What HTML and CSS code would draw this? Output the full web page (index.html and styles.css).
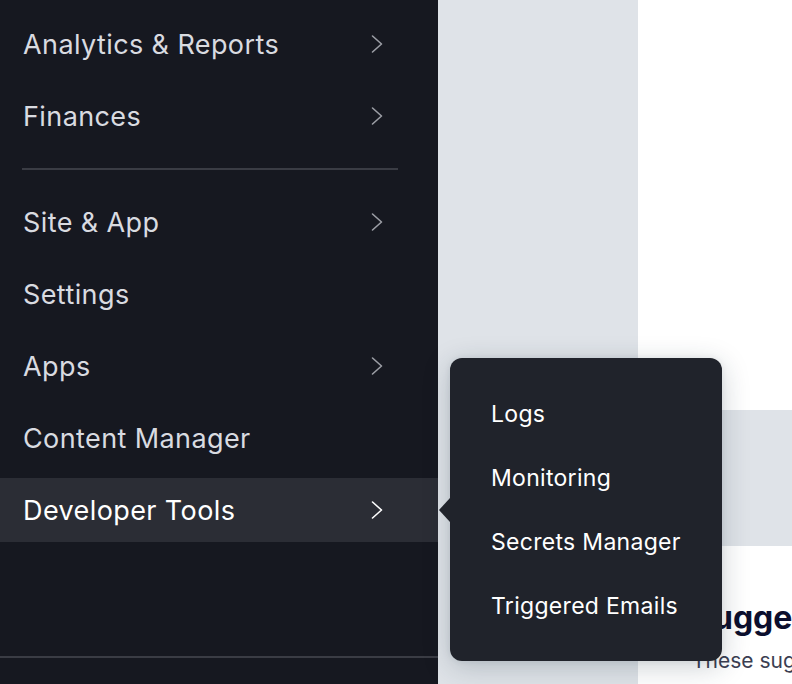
FILE: index.html
```html
<!DOCTYPE html>
<html>
<head>
<meta charset="utf-8">
<link rel="stylesheet" href="styles.css">
</head>
<body>
<div class="app">
  <aside class="sidebar">
    <nav class="nav">
      <div class="row"><span class="label">Analytics &amp; Reports</span><svg class="chev" viewBox="0 0 24 24"><path d="M7.5 4 L16.5 12 L7.5 20"/></svg></div>
      <div class="row"><span class="label">Finances</span><svg class="chev" viewBox="0 0 24 24"><path d="M7.5 4 L16.5 12 L7.5 20"/></svg></div>
      <div class="divider"></div>
      <div class="row"><span class="label">Site &amp; App</span><svg class="chev" viewBox="0 0 24 24"><path d="M7.5 4 L16.5 12 L7.5 20"/></svg></div>
      <div class="row"><span class="label">Settings</span></div>
      <div class="row"><span class="label">Apps</span><svg class="chev" viewBox="0 0 24 24"><path d="M7.5 4 L16.5 12 L7.5 20"/></svg></div>
      <div class="row"><span class="label">Content Manager</span></div>
      <div class="row active"><span class="label">Developer Tools</span><svg class="chev" viewBox="0 0 24 24"><path d="M7.5 4 L16.5 12 L7.5 20"/></svg></div>
    </nav>
    <div class="bottom-line"></div>
  </aside>
  <main class="main">
    <section class="card top-card"></section>
    <section class="card sugg-card">
      <h2 class="sugg-title">Suggestions</h2>
      <p class="sugg-text">These suggestions are based on your site</p>
    </section>
  </main>
  <div class="popup">
    <div class="popup-item">Logs</div>
    <div class="popup-item">Monitoring</div>
    <div class="popup-item">Secrets Manager</div>
    <div class="popup-item">Triggered Emails</div>
  </div>
</div>
</body>
</html>
```

FILE: styles.css
```css
* { box-sizing: border-box; }
html, body { margin: 0; padding: 0; height: 100%; overflow: hidden; }
body { font-family: Inter, "Noto Sans", sans-serif; background: #dfe3e8; }

.app { position: relative; display: flex; width: 792px; height: 684px; }

.sidebar {
  width: 438px;
  flex: none;
  background: #161820;
  display: flex;
  flex-direction: column;
}
.nav { padding-top: 12px; display: flex; flex-direction: column; gap: 8px; }
.row {
  height: 64px;
  display: flex;
  align-items: center;
  justify-content: space-between;
  padding: 0 49px 0 23px;
  color: #d9dbe0;
  font-size: 27px;
  letter-spacing: 0.4px;
}
.row.active { background: #2b2d35; color: #ffffff; }
.chev { width: 24px; height: 24px; fill: none; stroke: #9c9ea5; stroke-width: 1.6; stroke-linecap: round; stroke-linejoin: round; }
.row.active .chev { stroke: #ffffff; }
.divider { height: 2px; background: #3a3c44; margin: 12px 40px 12px 22px; }
.bottom-line { margin-top: auto; margin-bottom: 26px; height: 2px; background: #3a3c44; }

.main { flex: 1; padding-left: 200px; display: flex; flex-direction: column; gap: 136px; }
.card { background: #ffffff; }
.top-card { height: 410px; }
.sugg-card { flex: 1; padding: 52px 0 0 54px; white-space: nowrap; overflow: hidden; }
.sugg-title { margin: 0; font-size: 32px; font-weight: 700; color: #0c0f2e; line-height: 40px; }
.sugg-text { margin: 10px 0 0; font-size: 21px; color: #3b3e52; line-height: 26px; }

.popup {
  position: absolute;
  left: 450px;
  top: 358px;
  width: 272px;
  padding: 24px 0 23px;
  background: #20232b;
  border-radius: 12px;
  box-shadow: 0 6px 28px rgba(22, 45, 61, 0.22), 0 0 6px rgba(22, 45, 61, 0.08);
}
.popup::before {
  content: "";
  position: absolute;
  left: -11px;
  top: 140px;
  border-style: solid;
  border-width: 12px 11px 12px 0;
  border-color: transparent #20232b transparent transparent;
}
.popup-item {
  height: 64px;
  display: flex;
  align-items: center;
  padding-left: 41px;
  color: #ffffff;
  font-size: 23px;
  letter-spacing: 0.3px;
}
```
